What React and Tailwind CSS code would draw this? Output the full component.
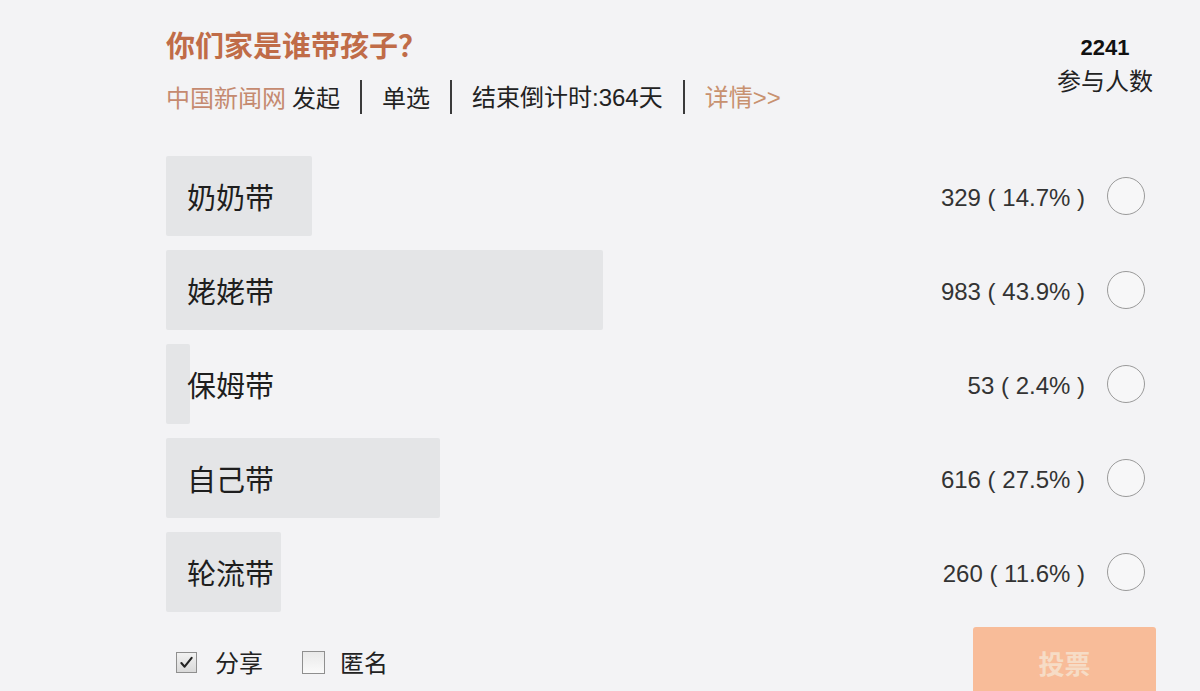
import React from "react";

const rows = [
  { label: "奶奶带", count: 329, pct: 14.7 },
  { label: "姥姥带", count: 983, pct: 43.9 },
  { label: "保姆带", count: 53, pct: 2.4 },
  { label: "自己带", count: 616, pct: 27.5 },
  { label: "轮流带", count: 260, pct: 11.6 },
];

const cjk = { fontFamily: '"Noto Sans CJK SC", "Noto Sans", sans-serif' };
const num = { fontFamily: '"Liberation Sans", Arial, "Noto Sans CJK SC", sans-serif' };

function Sep() {
  return <span className="mx-[20px] inline-block h-[34px] w-[2px] bg-[#3a3a3a]" />;
}

export default function App() {
  return (
    <div className="min-h-[691px] w-[1200px] overflow-hidden bg-[#f3f3f5] pl-[166px] pr-[40px] text-[#222]" style={cjk}>
      {/* header */}
      <div className="flex items-start justify-between">
        <div className="pt-[30px]">
          <div className="text-[29px] leading-[28px] font-bold text-[#c06c48]">你们家是谁带孩子？</div>
          <div className="mt-[22px] flex h-[34px] items-center text-[24px] leading-[34px]">
            <span className="text-[#c58a70]">中国新闻网</span>
            <span className="ml-[6px] text-[#222]">发起</span>
            <Sep />
            <span>单选</span>
            <Sep />
            <span>
              结束倒计时<span style={num}>:364</span>天
            </span>
            <Sep />
            <span className="text-[#c8916f]">
              详情<span style={num}>&gt;&gt;</span>
            </span>
          </div>
        </div>
        <div className="w-[110px] pt-[35px] text-center">
          <div className="text-[22px] leading-[26px] font-bold text-[#111]" style={num}>2241</div>
          <div className="mt-[4px] text-[24px] leading-[30px] text-[#222]">参与人数</div>
        </div>
      </div>

      {/* options */}
      <div className="mt-[42px] flex flex-col gap-[14px]">
        {rows.map((r) => (
          <div key={r.label} className="flex h-[80px] items-center">
            <div className="relative flex h-full flex-1 items-center">
              <div
                className="absolute left-0 top-0 h-full rounded-[2px] bg-[#e4e5e7]"
                style={{ width: `${r.pct * 9.95}px` }}
              />
              <span className="relative pl-[21px] text-[29px] leading-[36px] text-[#1e1e1e]">{r.label}</span>
            </div>
            <div className="mr-[22px] pt-[4px] text-[24px] leading-[30px] text-[#333]" style={num}>
              {r.count} ( {r.pct}% )
            </div>
            <div className="mr-[15px] h-[38px] w-[38px] rounded-full border border-[#9a9a9a] bg-[#f7f7f8]" />
          </div>
        ))}
      </div>

      {/* footer */}
      <div className="mt-[15px] flex items-start justify-between">
        <div className="flex h-[70px] items-center text-[24px] text-[#222]">
          <span className="ml-[10px] flex h-[21px] w-[21px] items-center justify-center border border-[#8f8f8f] bg-gradient-to-b from-[#f2f2f2] to-[#d9d9d9]">
            <svg width="15" height="15" viewBox="0 0 16 16">
              <path d="M2.5 8.5 L6 12.5 L13.5 3" fill="none" stroke="#222" strokeWidth="2.2" strokeLinecap="round" strokeLinejoin="round" />
            </svg>
          </span>
          <span className="ml-[18px]">分享</span>
          <span className="ml-[39px] h-[23px] w-[23px] border border-[#8f8f8f] bg-gradient-to-b from-[#e9e9e9] to-[#fafafa]" />
          <span className="ml-[15px]">匿名</span>
        </div>
        <div className="mr-[4px] flex h-[70px] w-[183px] items-center justify-center rounded-[3px] bg-[#f8bc99] text-[26px] font-bold text-[#f6dcc6]">
          投票
        </div>
      </div>
    </div>
  );
}
